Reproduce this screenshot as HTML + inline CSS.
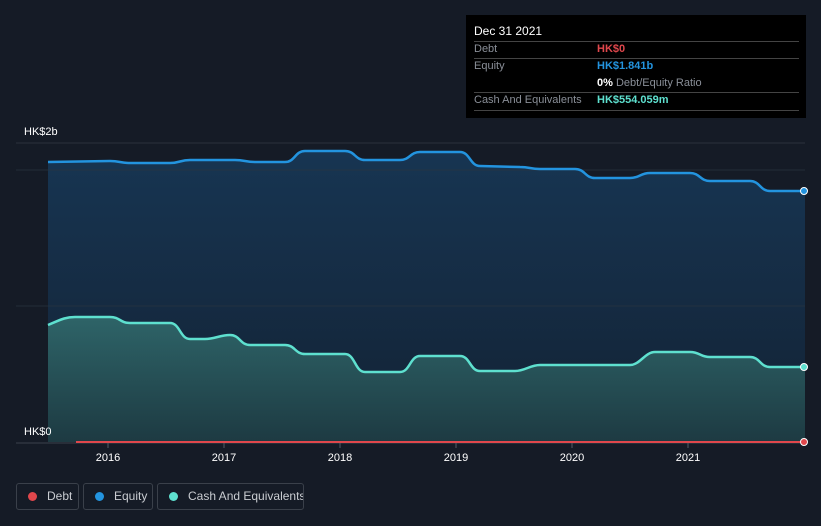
<!DOCTYPE html>
<html><head><style>
body{margin:0;background:#151b26;width:821px;height:526px;overflow:hidden;font-family:"Liberation Sans",sans-serif;position:relative}
.tt{position:absolute;left:466px;top:15px;width:340px;height:103px;background:#000;color:#fff;font-size:11px}
.r{position:absolute;left:8px;width:325px;border-top:1px solid #444}
.lab{position:absolute;color:#8a8f98}
.leg{position:absolute;top:483px;height:27px;border:1px solid #3a404a;border-radius:3px;color:#c9ccd1;font-size:12px;line-height:25px;box-sizing:border-box;white-space:nowrap;overflow:hidden}
.leg i{display:inline-block;width:9px;height:9px;border-radius:50%;margin:0 10px 0 11px;vertical-align:-1px}
</style></head><body>
<svg width="821" height="526" style="position:absolute;left:0;top:0">
<defs>
<linearGradient id="ge" x1="0" y1="0" x2="0" y2="1"><stop offset="0" stop-color="#173552"/><stop offset="1" stop-color="#132234"/></linearGradient>
<linearGradient id="gc" x1="0" y1="0" x2="0" y2="1"><stop offset="0" stop-color="#2e6468"/><stop offset="1" stop-color="#1d3a42"/></linearGradient>
</defs>
<line x1="16" y1="143" x2="805" y2="143" stroke="#2a313c"/>
<path d="M48,162 L110,161 C120,161 120,163 130,163 L170,163 C180,163 180,160 190,160 L235,160 C245,160 245,162 255,162 L285,162 C295,162 295,151 305,151 L345,151 C355,151 355,160 365,160 L400,160 C410,160 410,152 420,152 L460,152 C470,152 470,166 480,166 L520,167 C530,167 530,169 540,169 L575,169 C585,169 585,178 595,178 L630,178 C640,178 640,173 650,173 L690,173 C700,173 700,181 710,181 L750,181 C760,181 760,191 770,191 L805,191 L805,442 L48,442 Z" fill="url(#ge)"/>
<line x1="16" y1="170" x2="805" y2="170" stroke="#2a3440" stroke-width="1" opacity=".7"/>
<line x1="16" y1="306" x2="805" y2="306" stroke="#2a3440" stroke-width="1" opacity=".7"/>
<path d="M48,325 C60,320 65,317 75,317 L110,317 C120,317 120,323 130,323 L170,323 C180,323 180,339 190,339 L205,339 C215,339 220,335 230,335 C240,335 240,345 250,345 L285,345 C295,345 295,354 305,354 L345,354 C355,354 355,372 365,372 L400,372 C410,372 410,356 420,356 L460,356 C470,356 470,371 480,371 L515,371 C525,371 530,365 540,365 L630,365 C640,365 645,352 655,352 L690,352 C700,352 700,357 710,357 L750,357 C760,357 760,367 770,367 L805,367 L805,442 L48,442 Z" fill="url(#gc)"/>
<path d="M48,162 L110,161 C120,161 120,163 130,163 L170,163 C180,163 180,160 190,160 L235,160 C245,160 245,162 255,162 L285,162 C295,162 295,151 305,151 L345,151 C355,151 355,160 365,160 L400,160 C410,160 410,152 420,152 L460,152 C470,152 470,166 480,166 L520,167 C530,167 530,169 540,169 L575,169 C585,169 585,178 595,178 L630,178 C640,178 640,173 650,173 L690,173 C700,173 700,181 710,181 L750,181 C760,181 760,191 770,191 L805,191" fill="none" stroke="#2394df" stroke-width="2.5"/>
<path d="M48,325 C60,320 65,317 75,317 L110,317 C120,317 120,323 130,323 L170,323 C180,323 180,339 190,339 L205,339 C215,339 220,335 230,335 C240,335 240,345 250,345 L285,345 C295,345 295,354 305,354 L345,354 C355,354 355,372 365,372 L400,372 C410,372 410,356 420,356 L460,356 C470,356 470,371 480,371 L515,371 C525,371 530,365 540,365 L630,365 C640,365 645,352 655,352 L690,352 C700,352 700,357 710,357 L750,357 C760,357 760,367 770,367 L805,367" fill="none" stroke="#5ee0cf" stroke-width="2.5"/>
<line x1="16" y1="443" x2="805" y2="443" stroke="#3a414c"/>
<line x1="76" y1="442" x2="805" y2="442" stroke="#e0474c" stroke-width="2"/>
<circle cx="804" cy="191" r="3.5" fill="#2394df" stroke="#fff" stroke-width="1"/>
<circle cx="804" cy="367" r="3.5" fill="#5ee0cf" stroke="#fff" stroke-width="1"/>
<circle cx="804" cy="442" r="3.5" fill="#e0474c" stroke="#fff" stroke-width="1"/>
<g stroke="#555b65"><line x1="108" y1="443" x2="108" y2="448"/><line x1="224" y1="443" x2="224" y2="448"/><line x1="340" y1="443" x2="340" y2="448"/><line x1="456" y1="443" x2="456" y2="448"/><line x1="572" y1="443" x2="572" y2="448"/><line x1="688" y1="443" x2="688" y2="448"/></g>
<g fill="#fff" font-size="11" text-anchor="middle" font-family="Liberation Sans"><text x="108" y="461">2016</text><text x="224" y="461">2017</text><text x="340" y="461">2018</text><text x="456" y="461">2019</text><text x="572" y="461">2020</text><text x="688" y="461">2021</text></g>
<text x="24" y="135" fill="#fff" font-size="11" font-family="Liberation Sans">HK$2b</text>
<text x="24" y="435" fill="#fff" font-size="11" font-family="Liberation Sans">HK$0</text>
</svg>
<div class="tt">
<div style="position:absolute;left:8px;top:9px;font-size:12px">Dec 31 2021</div>
<div class="r" style="top:26px"></div>
<div class="lab" style="left:8px;top:28px">Debt</div><div style="position:absolute;left:131px;top:28px;color:#e0474c;font-weight:bold">HK$0</div>
<div class="r" style="top:43px"></div>
<div class="lab" style="left:8px;top:45px">Equity</div><div style="position:absolute;left:131px;top:45px;color:#2394df;font-weight:bold">HK$1.841b</div>
<div style="position:absolute;left:131px;top:62px"><b>0%</b> <span style="color:#8a8f98">Debt/Equity Ratio</span></div>
<div class="r" style="top:77px"></div>
<div class="lab" style="left:8px;top:79px">Cash And Equivalents</div><div style="position:absolute;left:131px;top:79px;color:#5ee0cf;font-weight:bold">HK$554.059m</div>
<div class="r" style="top:95px"></div>
</div>
<div class="leg" style="left:16px;width:63px"><i style="background:#e0474c"></i>Debt</div>
<div class="leg" style="left:83px;width:70px"><i style="background:#2394df"></i>Equity</div>
<div class="leg" style="left:157px;width:147px"><i style="background:#5ee0cf"></i>Cash And Equivalents</div>
</body></html>
